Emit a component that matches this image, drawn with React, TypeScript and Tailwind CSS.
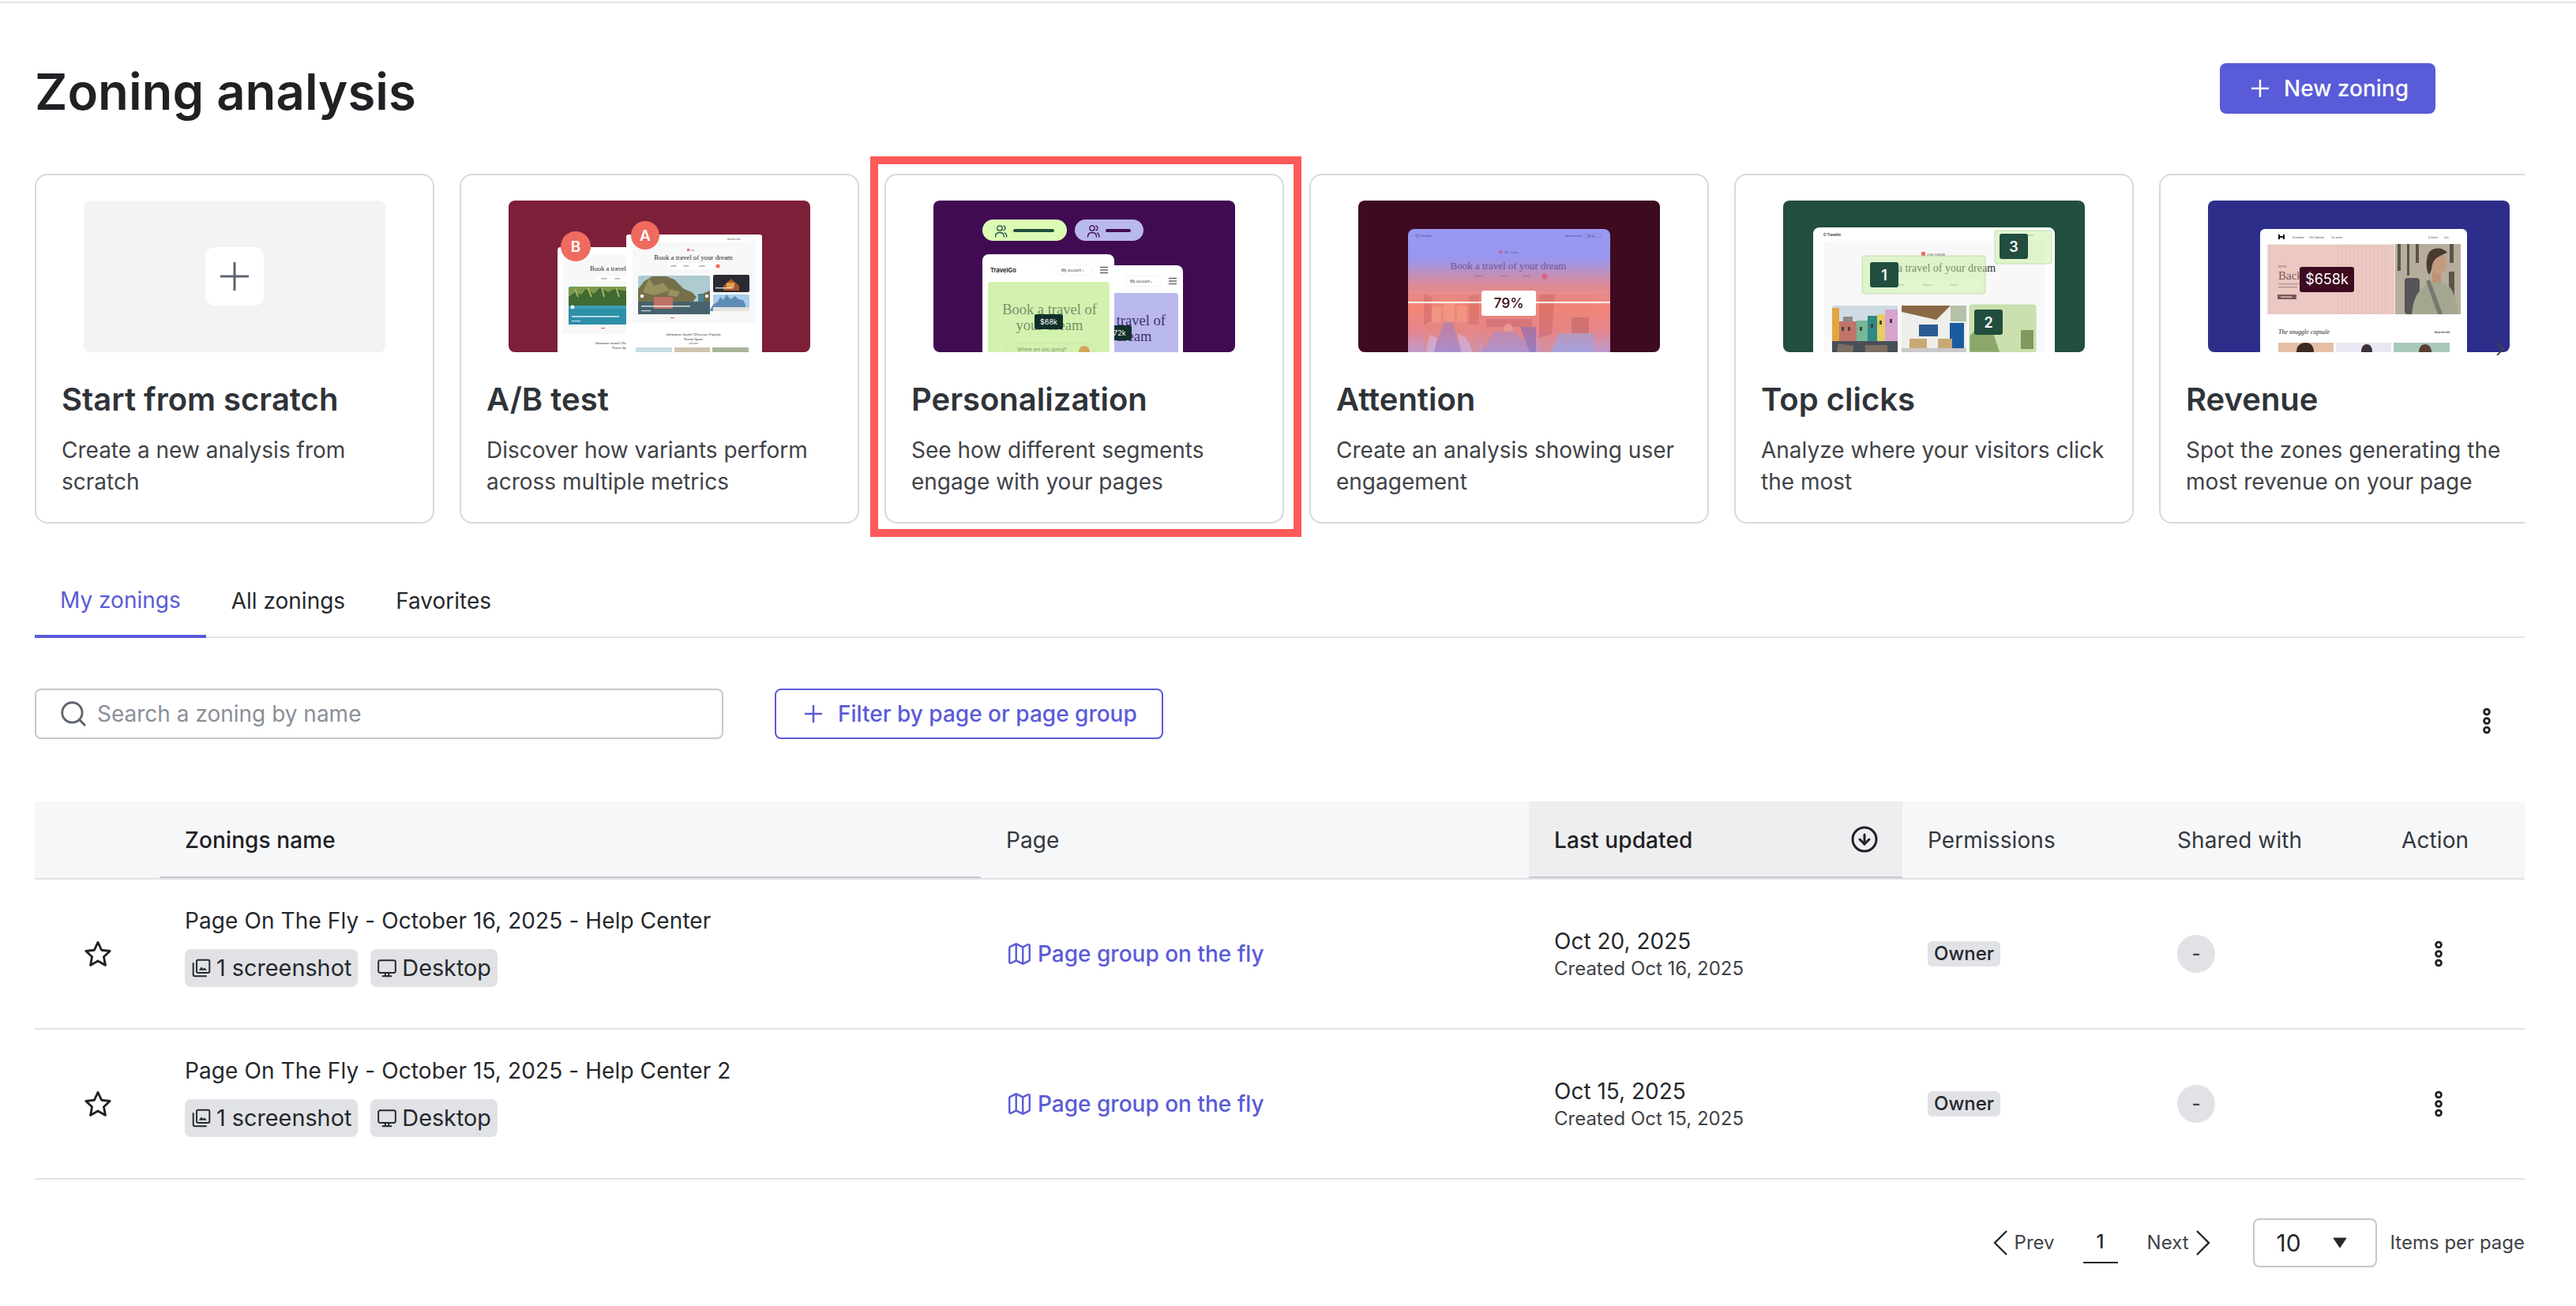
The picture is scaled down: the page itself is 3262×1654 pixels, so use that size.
import { CircleArrowDown, Map as MapIcon, Search } from 'lucide-react'
import type { ReactNode } from 'react'

const SERIF = '"Liberation Serif", serif'

const Thumb = ({ className, children }: { className: string; children: ReactNode }) => (
  <div className={`mx-auto h-[192px] w-[382px] overflow-hidden rounded-[8px] ${className}`}>
    <svg width="382" height="192" viewBox="0 0 382 192" className="block">
      {children}
    </svg>
  </div>
)

// the thumbnails are scaled-down screenshots, so their photos read soft
const Photo = ({ children, opacity = 1 }: { children: ReactNode; opacity?: number }) => (
  <g filter="url(#soft)" opacity={opacity}>
    {children}
  </g>
)

const Tiny = ({ x, y, children, size = 3, anchor = 'start', fill = '#555' }: { x: number; y: number; children: string; size?: number; anchor?: 'start' | 'middle' | 'end'; fill?: string }) => (
  <text x={x} y={y} fontSize={size} textAnchor={anchor} fill={fill}>
    {children}
  </text>
)

const Serif = ({ x, y, size, fill = '#333', anchor = 'middle', italic, children }: { x: number; y: number; size: number; fill?: string; anchor?: 'start' | 'middle' | 'end'; italic?: boolean; children: string }) => (
  <text x={x} y={y} fontSize={size} fontFamily={SERIF} fill={fill} textAnchor={anchor} fontStyle={italic ? 'italic' : 'normal'}>
    {children}
  </text>
)

function AbThumb() {
  return (
    <Thumb className="bg-[#7e1f39]">
      {/* variant B */}
      <rect x="62" y="59" width="110" height="140" rx="4" fill="#fff" />
      <rect x="69" y="68" width="100" height="101" fill="#f8f8f8" />
      <Serif x={103} y={89} size={8.5} anchor="start" fill="#2c2c2c">Book a travel of</Serif>
      <rect x="112" y="95" width="50" height="7" rx="3.5" fill="#fff" />
      <Tiny x={117} y={100} size={2.4}>Where</Tiny>
      <Tiny x={134} y={100} size={2.4}>Check</Tiny>
      <Photo>
        <rect x="76" y="109" width="90" height="48" rx="2" fill="#3d9fb3" />
        <path d="M76 111q4-2 8-2h82v24H76z" fill="#7d9a4c" />
        <path d="M76 122l8-6 8 3 6-7 10 6 8-8 10 6 8-4 32 6v15H76z" fill="#3f6a32" />
        <path d="M84 112l4 10M100 110l5 12M118 110l3 12M136 110l4 12" stroke="#a8b564" strokeWidth="2" />
        <rect x="76" y="137" width="90" height="20" fill="#2f8fa8" />
      </Photo>
      <rect x="80" y="146" width="60" height="1.6" fill="#fff" opacity=".8" />
      <rect x="80" y="152" width="11" height="1.2" fill="#fff" opacity=".7" />
      <circle cx="81" cy="135" r="2.4" fill="#fff" />
      <rect x="117" y="161" width="5" height="1.2" fill="#ef6a5f" />
      <Serif x={109} y={182} size={4.5} anchor="start" fill="#222" italic>Adventure Awaits! Discover</Serif>
      <Serif x={131} y={188} size={4.5} anchor="start" fill="#222" italic>Travel Spots</Serif>

      {/* variant A */}
      <rect x="149" y="43" width="172" height="160" rx="3" fill="#fff" />
      <rect x="157" y="53" width="156" height="102" rx="1" fill="#f8f8f8" />
      <Tiny x={277} y={50} size={2.4}>Become a host</Tiny>
      <rect x="298" y="46" width="15" height="5" rx="2.5" fill="#fff" stroke="#ddd" strokeWidth=".4" />
      <rect x="226" y="61" width="3" height="3" fill="#ef6a5f" />
      <Tiny x={230} y={64} size={2.4}>4.98</Tiny>
      <Serif x={234} y={75} size={8.8} fill="#2a2a2a">Book a travel of your dream</Serif>
      <rect x="201" y="79" width="67" height="8" rx="4" fill="#fff" />
      <circle cx="265" cy="83" r="2.6" fill="#ef6a5f" />
      <Tiny x={205} y={84} size={2.4}>Where</Tiny>
      <Tiny x={221} y={84} size={2.4}>Check</Tiny>
      <Tiny x={241} y={84} size={2.4}>Guests</Tiny>

      <Photo>
        <rect x="164" y="95" width="91" height="49" rx="2" fill="#aecbd2" />
        <path d="M240 118h15v26h-15z" fill="#4f8391" />
        <path d="M164 112l8-10 10-6h18l10 4 12 12 10 4 6 6-16 22h-58z" fill="#746f48" />
        <path d="M178 98l6 10 12-4 8 10-20 6-14-4zM205 112l12 4-4 6-12-2z" fill="#97905f" />
        <path d="M246 118l9-4v16h-7z" fill="#68684a" />
        <rect x="164" y="128" width="91" height="16" fill="#47626c" />
        <rect x="184" y="122" width="24" height="15" fill="#bd7364" />
      </Photo>
      <circle cx="169" cy="121" r="2.2" fill="#fff" />
      <circle cx="251" cy="121" r="2.2" fill="#fff" />
      <rect x="168" y="133" width="62" height="1.6" fill="#fff" opacity=".75" />
      <rect x="168" y="139" width="12" height="1.2" fill="#fff" opacity=".75" />
      <Photo>
        <rect x="259" y="94" width="46" height="22" rx="2" fill="#2c2c30" />
        <path d="M272 108l10-9 10 9v6h-20z" fill="#a9562a" />
        <rect x="276" y="104" width="10" height="6" fill="#e0a04c" />
        <rect x="259" y="119" width="46" height="21" rx="2" fill="#a8cdec" />
        <path d="M259 132l6-4 3-6 4 4 4-7 5 6 6-4 4 4 6 1 3 6v8h-46z" fill="#5f8cb5" />
        <rect x="259" y="135" width="46" height="5" fill="#e4e4e0" />
      </Photo>
      <rect x="262" y="110" width="22" height="1.4" fill="#fff" opacity=".8" />
      <rect x="205" y="148" width="5" height="1.2" fill="#ef6a5f" />
      <Serif x={234} y={171} size={4.8} fill="#222" italic>Adventure Awaits! Discover Popular</Serif>
      <Serif x={234} y={177} size={4.8} fill="#222" italic>Travel Spots</Serif>
      <Tiny x={234} y={182} size={2.4} anchor="middle">View more</Tiny>
      <Photo>
        <rect x="161" y="186" width="46" height="8" fill="#c5dde4" />
        <rect x="210" y="186" width="45" height="8" fill="#cfc3ac" />
        <rect x="258" y="186" width="46" height="8" fill="#a9b39a" />
      </Photo>

      <circle cx="85" cy="58" r="19" fill="#ef6a5f" />
      <text x="85" y="65" fontSize="19" fontWeight="600" fill="#fff" textAnchor="middle">B</text>
      <circle cx="173" cy="44" r="18" fill="#ef6a5f" />
      <text x="173" y="51" fontSize="19" fontWeight="600" fill="#fff" textAnchor="middle">A</text>
    </Thumb>
  )
}

const UsersGlyph = ({ x, color }: { x: number; color: string }) => (
  <g transform={`translate(${x} 31)`} fill="none" stroke={color} strokeWidth="1.3" strokeLinecap="round">
    <circle cx="6" cy="4" r="3.2" />
    <path d="M0.5 15c0-3.5 2.3-5.5 5.5-5.5s5.5 2 5.5 5.5" />
    <path d="M11 1.2c1.4.6 2 1.7 2 2.8s-.6 2.2-2 2.8" />
    <path d="M12.5 10c1.6.8 2.3 2.5 2.3 5" />
  </g>
)

function PhoneCard({ dx, dy, panel, ink, pill, title, amount, brand }: { dx: number; dy: number; panel: string; ink: string; pill: string; title: string[]; amount: string; brand?: boolean }) {
  return (
    <g transform={`translate(${dx} ${dy})`}>
      <rect x="62" y="68" width="167" height="150" rx="8" fill="#fff" />
      {brand && <text x="72" y="91" fontSize="7.5" fontWeight="700" fill="#2a2a2a">TravelGo</text>}
      <rect x="155" y="81.5" width="46" height="13" rx="6.5" fill="#fff" stroke="#e5e5e5" strokeWidth=".5" />
      <text x="162" y="90" fontSize="4.5" fill="#333">My account  ›</text>
      <path d="M211 84.5h10M211 88h10M211 91.5h10" stroke="#666" strokeWidth="1.4" />
      <rect x="69" y="103" width="154" height="110" rx="4" fill={panel} />
      <Serif x={147} y={144} size={18.5} fill={ink}>{title[0]}</Serif>
      <Serif x={147} y={164} size={18.5} fill={ink}>{title[1]}</Serif>
      <rect x="128" y="144" width="36" height="19" rx="2" fill="#12302b" />
      <text x="146" y="157" fontSize="9" fill="#fff" textAnchor="middle">{amount}</text>
      <rect x="91" y="181" width="112" height="24" rx="10" fill="none" stroke={pill} strokeWidth=".8" />
      <text x="106" y="191" fontSize="6" fill="#7f926f">Where are you going?</text>
      <circle cx="191" cy="191" r="7" fill="#d4a75c" />
    </g>
  )
}

function PersonalizationThumb() {
  return (
    <Thumb className="bg-[#400b52]">
      <rect x="62" y="24" width="107" height="27" rx="13.5" fill="#dcfcb5" />
      <UsersGlyph x={78} color="#21503f" />
      <rect x="101" y="36" width="52" height="4" rx="2" fill="#21503f" />
      <rect x="179" y="24" width="87" height="27" rx="13.5" fill="#b9b9ec" />
      <UsersGlyph x={195} color="#400b52" />
      <rect x="218" y="36" width="32" height="4" rx="2" fill="#400b52" />
      <PhoneCard dx={87} dy={14} panel="#b9b9ec" ink="#3f3170" pill="#a9a9e0" title={['Book a travel of', 'your dream']} amount="$72k" />
      <PhoneCard dx={0} dy={0} panel="#d3f2af" ink="#76936a" pill="#c8e5a5" title={['Book a travel of', 'your dream']} amount="$68k" brand />
    </Thumb>
  )
}

function AttentionThumb() {
  return (
    <Thumb className="bg-[#3d0a20]">
      <defs>
        <linearGradient id="heat" x1="0" y1="0" x2="0" y2="1">
          <stop offset="0" stopColor="#9799f3" />
          <stop offset=".22" stopColor="#9896ee" />
          <stop offset=".42" stopColor="#dc8b97" />
          <stop offset=".58" stopColor="#f48576" />
          <stop offset=".76" stopColor="#e4858f" />
          <stop offset="1" stopColor="#aaa6ed" />
        </linearGradient>
      </defs>
      <rect x="63" y="36" width="256" height="170" rx="8" fill="url(#heat)" />
      <text x="78" y="46" fontSize="3.5" fill="#4d3f7a">TravelGo</text>
      <circle cx="74.5" cy="44.5" r="1.8" fill="none" stroke="#4d3f7a" strokeWidth=".5" />
      <text x="262" y="46" fontSize="3" fill="#4d3f7a">Become a host</text>
      <rect x="285" y="42" width="22" height="5" rx="2.5" fill="none" stroke="#7a6fb5" strokeWidth=".4" />
      <text x="290" y="46" fontSize="3" fill="#4d3f7a">My acc</text>
      <rect x="178" y="63" width="4" height="4" fill="#c763a8" />
      <text x="184" y="66.5" fontSize="3" fill="#6b5aa0">4.98 · Google</text>
      <Serif x={190} y={87} size={13} fill="#6657a0">Book a travel of your dream</Serif>
      <text x="148" y="97" fontSize="3" fill="#7a6a98">Where</text>
      <text x="179" y="97" fontSize="3" fill="#7a6a98">Check in</text>
      <text x="208" y="97" fontSize="3" fill="#7a6a98">Guests</text>
      <circle cx="236" cy="96" r="3.6" fill="#db5f86" />

      <rect x="63" y="116" width="256" height="1" fill="#fff" opacity=".12" />
      <Photo opacity={0.42}>
        <rect x="83" y="119" width="70" height="73" rx="2" fill="#e98a78" />
        <path d="M83 119l10 3v30l-10 6zM140 121l13-2v38h-13z" fill="#c9655f" />
        <path d="M93 135h12v20H93zM108 130h14v24h-14zM125 134h12v20h-12z" fill="#f4ab8a" />
        <path d="M95 192l13-38h12l10 38z" fill="#8a80d0" />
        <path d="M90 170l10 4-4 18H86zM125 168l12 6 8 18h-14z" fill="#d8c8e4" />
        <rect x="156" y="119" width="69" height="73" rx="2" fill="#e5877c" />
        <rect x="162" y="150" width="58" height="10" fill="#bd6169" />
        <circle cx="190" cy="162" r="6" fill="#f0b0a0" />
        <path d="M156 192l16-26h26l27 26z" fill="#9a8bd0" />
        <path d="M205 160h20v32h-8z" fill="#5f5cc0" />
        <rect x="229" y="119" width="69" height="73" rx="2" fill="#e9877a" />
        <path d="M229 119h20l-4 50-16 5z" fill="#c4605a" />
        <path d="M270 148h22v20h-22z" fill="#ad5a58" />
        <path d="M245 192l8-24h45v24z" fill="#86aef2" />
      </Photo>
      <rect x="63" y="128" width="256" height="2" fill="#fff" />
      <rect x="156" y="114" width="69" height="32" rx="3" fill="#fff" />
      <text x="190.5" y="136" fontSize="17.5" fontWeight="500" fill="#3d0a20" textAnchor="middle">79%</text>
    </Thumb>
  )
}

const ClickBadge = ({ x, y, n }: { x: number; y: number; n: string }) => (
  <g>
    <rect x={x} y={y} width="36" height="32" rx="3" fill="#214e3f" />
    <text x={x + 18} y={y + 22.5} fontSize="18" fontWeight="600" fill="#fff" textAnchor="middle">{n}</text>
  </g>
)

function TopClicksThumb() {
  return (
    <Thumb className="bg-[#214e3f]">
      <rect x="38" y="34" width="306" height="170" rx="8" fill="#fff" />
      <rect x="51" y="51" width="280" height="150" fill="#f8f8f8" />
      <text x="51" y="45" fontSize="4.5" fontWeight="600" fill="#222">O Travelio</text>
      <rect x="175" y="65" width="5" height="5" fill="#ef6a5f" />
      <text x="182" y="70" fontSize="4" fill="#444">4.98 Google</text>
      <Serif x={190} y={90} size={14} fill="#2a2a2a">Book a travel of your dream</Serif>
      <rect x="116" y="100" width="134" height="12" rx="6" fill="#fff" />
      <text x="144" y="108" fontSize="3" fill="#666">Where</text>
      <text x="177" y="108" fontSize="3" fill="#666">Check in</text>
      <text x="211" y="108" fontSize="3" fill="#666">Guests</text>
      <text x="300" y="45" fontSize="3" fill="#555">My account</text>

      <Photo>
        <rect x="62" y="133" width="83" height="59" rx="2" fill="#cfdbe4" />
        <path d="M62 136h9v44h-9z" fill="#e4a53f" />
        <path d="M71 153h22v27H71z" fill="#c0756a" />
        <path d="M76 147h12v6H76z" fill="#8d8a88" />
        <path d="M93 152h14v28H93z" fill="#75b79a" />
        <path d="M107 146h12v34h-12z" fill="#2f8a87" />
        <path d="M119 144h10v36h-10z" fill="#e3d060" />
        <path d="M129 138h16v42h-16z" fill="#d7a3cf" />
        <path d="M74 160h3v5h-3zM82 160h3v5h-3zM97 160h3v5h-3zM111 156h3v5h-3zM122 152h3v5h-3zM135 150h3v5h-3z" fill="#4a4038" />
        <rect x="62" y="178" width="83" height="14" fill="#4a4f58" />
        <path d="M70 181l20 3-2 8H68zM104 183h28v9h-28z" fill="#7b6e60" />
      </Photo>
      <Photo>
        <rect x="150" y="133" width="82" height="59" rx="2" fill="#eeeeea" />
        <path d="M150 133h62l-18 18-44-10z" fill="#8a6a45" />
        <path d="M212 133h20v20h-20z" fill="#b5c2a8" />
        <rect x="172" y="157" width="24" height="15" fill="#2b5a90" />
        <rect x="211" y="155" width="18" height="37" fill="#1f5aa0" />
        <path d="M160 175h22v17h-22zM196 175h18v17h-18z" fill="#c9a878" />
        <rect x="150" y="187" width="82" height="5" fill="#c9c9c9" />
      </Photo>
      <Photo>
        <rect x="236" y="132" width="84" height="60" rx="3" fill="#ccdfae" />
        <path d="M236 172l16-18 14 14 8 24h-38z" fill="#8ba86a" />
        <rect x="301" y="164" width="16" height="24" fill="#7f9a5f" />
      </Photo>
      <rect x="236" y="132" width="84" height="60" rx="3" fill="none" stroke="#b5dba0" strokeWidth=".8" />

      <rect x="100" y="70" width="156" height="48" rx="3" fill="#c6f0a0" fillOpacity=".5" stroke="#b5dba0" strokeWidth=".8" />
      <rect x="268" y="38" width="72" height="42" rx="3" fill="#c6f0a0" fillOpacity=".5" stroke="#b5dba0" strokeWidth=".8" />
      <ClickBadge x={110} y={78} n="1" />
      <ClickBadge x={242} y={138} n="2" />
      <ClickBadge x={274} y={42} n="3" />
    </Thumb>
  )
}

function RevenueThumb() {
  return (
    <Thumb className="bg-[#2d2e8a]">
      <rect x="66" y="36" width="262" height="170" rx="6" fill="#fff" />
      <path d="M89 43h2v6h-2zM95 43h2v6h-2zM91 45h4v2h-4z" fill="#111" />
      <text x="107" y="48" fontSize="2.8" fill="#444">Activewear</text>
      <text x="128" y="48" fontSize="2.8" fill="#444">The Collection</text>
      <text x="156" y="48" fontSize="2.8" fill="#444">Our stores</text>
      <text x="279" y="48" fontSize="2.8" fill="#444">Q Search</text>
      <text x="299" y="48" fontSize="2.8" fill="#444">Cart</text>
      <rect x="74" y="55" width="163" height="89" fill="#eee" />
      <rect x="76" y="56" width="160" height="88" fill="#ebc8c2" />
      <path d="M165 56v88M170 56v88M175 56v88M180 56v88M185 56v88M190 56v88M195 56v88M200 56v88M205 56v88M210 56v88M215 56v88M220 56v88M225 56v88" stroke="#e5bfb9" strokeWidth="1" />
      <text x="89" y="85" fontSize="2.8" fill="#7a5a5a">NEW IN</text>
      <Serif x={89} y={100} size={15} anchor="start" fill="#7a5a5a">Back</Serif>
      <rect x="89" y="105" width="26" height="1.2" fill="#a98d8a" />
      <rect x="89" y="109" width="24" height="1.2" fill="#a98d8a" />
      <rect x="88" y="119" width="24" height="6" fill="#7a5a5a" />
      <rect x="92" y="121.5" width="14" height="1.2" fill="#e6d3d0" />

      <Photo>
        <rect x="237" y="55" width="83" height="89" fill="#b7ad9c" />
        <path d="M240 55h4v34h-4zM252 55h3v40h-3zM263 55h4v24h-4zM306 55h5v24h-5zM305 90h7v54h-7z" fill="#5a5548" />
        <rect x="249" y="98" width="19" height="46" rx="4" fill="#565558" />
        <path d="M258 144c2-20 8-32 20-38l10-4 14 4c9 6 13 20 15 38z" fill="#a3a78f" />
        <path d="M281 100l16 44h-6l-15-42z" fill="#7a7670" />
        <path d="M284 88h11v16h-11z" fill="#bd9378" />
        <path d="M288 64c8 0 14 6 14 15 0 8-4 14-10 14-7 0-10-7-10-14 0-9 1-15 6-15z" fill="#c49b80" />
        <path d="M303 66c-6-8-22-8-25 4-2 8-2 18 2 24 3-4 3-8 4-13 2-5 3-9 19-15z" fill="#4a3a30" />
      </Photo>

      <rect x="116" y="84" width="69" height="32" rx="3" fill="#3d0a20" />
      <text x="150.5" y="106" fontSize="18" fill="#fff" textAnchor="middle">$658k</text>

      <Serif x={89} y={169} size={8} anchor="start" fill="#222" italic>The snuggle capsule</Serif>
      <text x="306" y="168" fontSize="3" fontWeight="600" fill="#222" textAnchor="end">Shop the edit</text>
      <Photo>
        <rect x="89" y="180" width="70" height="14" fill="#e5bfa5" />
        <path d="M112 192c0-9 6-12 12-12s10 4 10 12z" fill="#3a2a24" />
        <rect x="162" y="180" width="70" height="14" fill="#e9e7f1" />
        <path d="M194 192c0-7 3-10 7-10s7 3 7 10z" fill="#3a3038" />
        <rect x="235" y="180" width="71" height="14" fill="#a8c9ba" />
        <path d="M267 192c0-7 4-10 8-10s8 3 8 10z" fill="#5a3e34" />
      </Photo>
    </Thumb>
  )
}

function PlusGlyph({ size, stroke, className }: { size: number; stroke: number; className?: string }) {
  return (
    <svg width={size} height={size} viewBox={`0 0 ${size} ${size}`} className={className} stroke="currentColor" strokeWidth={stroke}>
      <path d={`M${size / 2} 0V${size}M0 ${size / 2}H${size}`} />
    </svg>
  )
}

function ScratchThumb() {
  return (
    <div className="mx-auto flex h-[192px] w-[382px] items-center justify-center rounded-[8px] bg-[#f2f3f5]">
      <div className="flex h-[74px] w-[74px] items-center justify-center rounded-[12px] bg-white">
        <PlusGlyph size={36} stroke={3} className="text-[#5d6470]" />
      </div>
    </div>
  )
}

function Kebab() {
  return (
    <svg width="12" height="36" viewBox="0 0 12 36" fill="none" stroke="#1f2124" strokeWidth="2.8">
      <circle cx="6" cy="6.5" r="3.4" />
      <circle cx="6" cy="18" r="3.4" />
      <circle cx="6" cy="29.5" r="3.4" />
    </svg>
  )
}

function StarOutline() {
  return (
    <svg width="38" height="38" viewBox="0 0 24 24" fill="none" stroke="#1f2124" strokeWidth="1.8" strokeLinejoin="round" className="ml-[2px]">
      <path d="M12 2.8l2.9 6.2 6.7.8-4.9 4.600 1.300 6.700L12 17.700l-6 3.400 1.300-6.700-4.900-4.600 6.700-.8z" />
    </svg>
  )
}

function ImagesGlyph() {
  return (
    <svg width="26" height="26" viewBox="0 0 24 24" fill="none" stroke="#25282c" strokeWidth="1.8">
      <rect x="6.5" y="2.5" width="15" height="15" rx="1.5" />
      <path d="M2.5 6.5v13.200c0 1 .8 1.800 1.800 1.800h13.200" strokeLinecap="round" />
      <path d="M9 14.500l3-4 2 2.500 1.500-1.500 3 3z" fill="#25282c" stroke="none" />
    </svg>
  )
}

function DesktopGlyph() {
  return (
    <svg width="26" height="26" viewBox="0 0 24 24" fill="none" stroke="#25282c" strokeWidth="1.8" strokeLinecap="round">
      <rect x="2" y="3" width="20" height="14.5" rx="2" />
      <path d="M10 18v2.500M14 18v2.500M7 21.500h10" />
    </svg>
  )
}

const cards = [
  { title: 'Start from scratch', text: 'Create a new analysis from scratch', art: <ScratchThumb /> },
  { title: 'A/B test', text: 'Discover how variants perform across multiple metrics', art: <AbThumb /> },
  { title: 'Personalization', text: 'See how different segments engage with your pages', art: <PersonalizationThumb /> },
  { title: 'Attention', text: 'Create an analysis showing user engagement', art: <AttentionThumb /> },
  { title: 'Top clicks', text: 'Analyze where your visitors click the most', art: <TopClicksThumb /> },
  { title: 'Revenue', text: 'Spot the zones generating the most revenue on your page', art: <RevenueThumb /> },
]

const rows = [
  { name: 'Page On The Fly - October 16, 2025 - Help Center', updated: 'Oct 20, 2025', created: 'Created Oct 16, 2025' },
  { name: 'Page On The Fly - October 15, 2025 - Help Center 2', updated: 'Oct 15, 2025', created: 'Created Oct 15, 2025' },
]

const COLS = 'grid grid-cols-[158px_1040px_694px_473px_316px_284px_188px]'

function Tag({ icon, label }: { icon: ReactNode; label: string }) {
  return (
    <span className="flex h-[48px] items-center gap-[6px] rounded-[8px] bg-[#e1e2e6] px-[8px] text-[28.8px] text-[#25282c]">
      {icon}
      {label}
    </span>
  )
}

export default function App() {
  return (
    <div className="relative h-[1654px] w-[3262px] overflow-hidden bg-white pt-[2px] font-['Inter',sans-serif]">
      <svg className="absolute h-0 w-0">
        <defs>
          <filter id="soft">
            <feGaussianBlur stdDeviation="0.7" />
          </filter>
        </defs>
      </svg>
      <div className="h-[2px] bg-[#e4e5e7]" />

      <main className="pr-[65px] pl-[44px]">
        <header className="mt-[76px] flex h-[64px] items-center justify-between pr-[113px]">
          <h1 className="pt-[7px] text-[63.5px] leading-none font-semibold text-[#1f2124]">Zoning analysis</h1>
          <button className="flex h-[64px] w-[273px] items-center gap-[19px] rounded-[8px] bg-[#5a5bd8] pl-[40px] text-[28px] font-medium text-white">
            <PlusGlyph size={22} stroke={2.5} />
            New zoning
          </button>
        </header>

        <section className="mt-[76px] flex gap-[32px] overflow-hidden">
          {cards.map((c) => (
            <article key={c.title} className="h-[443px] w-[506px] flex-none rounded-[16px] border-2 border-[#d8d9dd] p-[32px]">
              {c.art}
              <h2 className="mt-[36px] text-[40px] leading-[48px] font-semibold text-[#2f3338]">{c.title}</h2>
              <p className="mt-[20px] text-[28px] leading-[40px] text-[#3f4348]">{c.text}</p>
            </article>
          ))}
        </section>

        <nav className="mt-[49px] flex h-[96px] border-b-2 border-[#e1e2e6] text-[28px] text-[#25282c]">
          <a className="-mb-[2px] flex items-center border-b-4 border-[#5a5bd8] px-[32px] pt-[3px] text-[#5a5bd8]">My zonings</a>
          <a className="flex items-center px-[32px] pt-[3px]">All zonings</a>
          <a className="flex items-center px-[32px] pt-[3px]">Favorites</a>
        </nav>

        <div className="mt-[64px] flex items-start">
          <label className="flex h-[64px] w-[872px] items-center gap-[11px] rounded-[8px] border-2 border-[#c5c8ce] px-[28px]">
            <Search size={38} strokeWidth={1.8} className="text-[#5d6470]" />
            <span className="text-[28px] text-[#8a8f98]">Search a zoning by name</span>
          </label>
          <button className="ml-[65px] flex h-[64px] w-[492px] items-center gap-[20px] rounded-[8px] border-2 border-[#5a5bd8] pl-[36px] text-[28px] font-medium text-[#5a5bd8]">
            <PlusGlyph size={22} stroke={2.5} />
            Filter by page or page group
          </button>
          <div className="mt-[23px] mr-[42px] ml-auto">
            <Kebab />
          </div>
        </div>

        <div className="mt-[79px]">
          <div className={`${COLS} h-[99px] border-b-2 border-[#e1e2e6] bg-[#f6f7f9] text-[28px] tracking-[0.1px] text-[#34383d]`}>
            <div />
            <div className="flex items-center border-b-2 border-[#c8c9d0] px-[32px] pt-[2px] font-medium text-[#1f2124]">Zonings name</div>
            <div className="flex items-center px-[32px]">Page</div>
            <div className="flex items-center justify-between border-b-2 border-[#c8c9d0] bg-[#edeef0] pr-[30px] pl-[32px] font-medium text-[#1f2124]">
              <span className="pt-[2px]">Last updated</span>
              <CircleArrowDown size={36} strokeWidth={2} className="text-[#1f2124]" />
            </div>
            <div className="flex items-center px-[32px]">Permissions</div>
            <div className="flex items-center px-[32px]">Shared with</div>
            <div className="flex items-center px-[32px]">Action</div>
          </div>

          {rows.map((r) => (
            <div key={r.name} className={`${COLS} h-[190px] border-b-2 border-[#e1e2e6]`}>
              <div className="flex items-center justify-center">
                <StarOutline />
              </div>
              <div className="px-[32px] pt-[32px]">
                <p className="text-[28px] leading-[40px] tracking-[0.1px] text-[#25282c]">{r.name}</p>
                <div className="mt-[16px] flex gap-[16px]">
                  <Tag icon={<ImagesGlyph />} label="1 screenshot" />
                  <Tag icon={<DesktopGlyph />} label="Desktop" />
                </div>
              </div>
              <div className="flex items-center gap-[8px] px-[32px] text-[28px] font-medium text-[#5a5bd8]">
                <MapIcon size={34} strokeWidth={1.7} className="-mr-[2px]" />
                Page group on the fly
              </div>
              <div className="flex flex-col justify-center px-[32px] text-[#25282c]">
                <p className="text-[28px] leading-[38px]">{r.updated}</p>
                <p className="text-[24px] leading-[32px] text-[#3f4348]">{r.created}</p>
              </div>
              <div className="flex items-center px-[32px]">
                <span className="flex h-[32px] items-center rounded-[6px] bg-[#e1e2e6] px-[8px] text-[24px] font-medium text-[#25282c]">Owner</span>
              </div>
              <div className="flex items-center px-[32px]">
                <span className="flex h-[48px] w-[48px] items-center justify-center rounded-full bg-[#e1e2e6] text-[24px] font-medium text-[#3f4348]">-</span>
              </div>
              <div className="flex items-center pl-[73px]">
                <Kebab />
              </div>
            </div>
          ))}
        </div>

        <footer className="mt-[49px] flex h-[62px] items-center justify-end text-[24px] text-[#3f4348]">
          <span className="flex items-center gap-[8px]">
            <svg width="20" height="32" viewBox="0 0 20 32" fill="none" stroke="#25282c" strokeWidth="2.4">
              <path d="M18 1L3 16l15 15" />
            </svg>
            Prev
          </span>
          <span className="ml-[36px] flex h-[52px] w-[44px] items-center justify-center border-b-2 border-[#25282c] font-medium text-[#25282c]">1</span>
          <span className="ml-[37px] flex items-center gap-[8px]">
            Next
            <svg width="20" height="32" viewBox="0 0 20 32" fill="none" stroke="#25282c" strokeWidth="2.4">
              <path d="M2 1l15 15L2 31" />
            </svg>
          </span>
          <div className="ml-[53px] flex h-[62px] w-[157px] items-center justify-between rounded-[8px] border-2 border-[#c5c8ce] pr-[36px] pl-[28px] text-[30px] text-[#25282c]">
            10
            <svg width="18" height="14" viewBox="0 0 18 14" fill="#25282c">
              <path d="M1 1h16L9 13z" stroke="#25282c" strokeLinejoin="round" />
            </svg>
          </div>
          <span className="ml-[17px]">Items per page</span>
        </footer>
      </main>

      {/* highlight drawn round the personalization card */}
      <div className="absolute top-[198px] left-[1102px] h-[482px] w-[546px] border-[10px] border-[#ff5a5a]" />
      {/* carousel arrow */}
      <svg className="absolute top-[434px] left-[3161px]" width="10" height="16" viewBox="0 0 10 16" fill="none" stroke="#3f4348" strokeWidth="1.8">
        <path d="M1 0l8 8-8 8" />
      </svg>
    </div>
  )
}
